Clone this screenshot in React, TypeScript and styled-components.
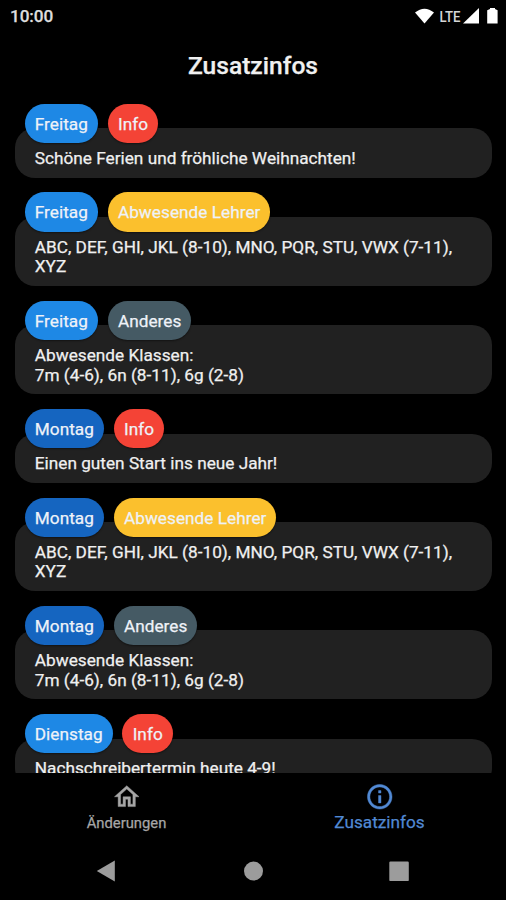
import React from "react";
import styled, { createGlobalStyle } from "styled-components";

const GlobalStyle = createGlobalStyle`
  body { margin: 0; background: #000; }
  * { box-sizing: border-box; }
`;

const Screen = styled.main`
  width: 506px;
  height: 900px;
  display: flex;
  flex-direction: column;
  overflow: hidden;
  background: #000;
  color: #f0f0f0;
  font-family: Roboto, sans-serif;
  -webkit-text-stroke: 0.25px currentColor;
`;

const StatusBar = styled.header`
  flex: none;
  height: 30px;
  padding: 2px 8px 0 10px;
  display: flex;
  align-items: center;
  justify-content: space-between;
`;

const Clock = styled.span`
  font-size: 17.2px;
  font-weight: 500;
  line-height: 20px;
  letter-spacing: -0.1px;
  color: #dedede;
`;

const StatusIcons = styled.svg`
  width: 86px;
  height: 20px;
  display: block;
`;

const Title = styled.h1`
  flex: none;
  margin: 0;
  height: 73.5px;
  line-height: 71px;
  text-align: center;
  font-size: 24.6px;
  font-weight: 500;
`;

const Feed = styled.section`
  flex: none;
  height: 669px;
  overflow: hidden;
  padding: 0.3px 14px 0 14.8px;
`;

const Entry = styled.article`
  margin-bottom: 14.8px;
`;

const Chips = styled.div`
  position: relative;
  z-index: 1;
  display: flex;
  gap: 9.8px;
  padding-left: 9.8px;
  margin-bottom: -14.8px;
`;

const Chip = styled.span<{ $color: string }>`
  height: 39.4px;
  padding: 0 10px 0 10.2px;
  border-radius: 19.7px;
  background: ${(p) => p.$color};
  box-shadow: 0 1px 2px rgba(0, 0, 0, 0.45);
  color: #eef2f8;
  font-size: 17.2px;
  line-height: 41px;
  letter-spacing: 0.04px;
  white-space: nowrap;
`;

const Card = styled.p`
  margin: 0;
  padding: 20.6px 9.8px 8.9px 20px;
  border-radius: 20px;
  background: #212121;
  font-size: 17.23px;
  line-height: 19.7px;
  white-space: pre-line;
`;

const Tabs = styled.nav`
  flex: none;
  height: 70px;
  display: grid;
  grid-template-columns: 1fr 1fr;
`;

const Tab = styled.div<{ $active?: boolean }>`
  display: flex;
  flex-direction: column;
  align-items: center;
  padding-top: 9.5px;
  color: ${(p) => (p.$active ? "#5189d4" : "#a6a6a6")};
  font-size: ${(p) => (p.$active ? "17.2px" : "14.8px")};
  line-height: ${(p) => (p.$active ? "20px" : "22px")};
  svg {
    width: 29.5px;
    height: 29.5px;
    fill: currentColor;
    stroke: currentColor;
    stroke-width: 0.35px;
    display: block;
  }
`;

const SystemBar = styled.footer`
  flex: 1;
  display: flex;
  justify-content: center;
  svg { width: 320px; height: 58px; display: block; }
`;

const BLUE = "#1e88e5";
const DEEP_BLUE = "#1565c0";
const INFO = { label: "Info", color: "#f44336" };
const TEACHERS = { label: "Abwesende Lehrer", color: "#fbc02d" };
const OTHER = { label: "Anderes", color: "#455a64" };

const absentTeachers = "ABC, DEF, GHI, JKL (8-10), MNO, PQR, STU, VWX (7-11), XYZ";
const absentClasses = "Abwesende Klassen:\n7m (4-6), 6n (8-11), 6g (2-8)";

const entries = [
  { day: "Freitag", dayColor: BLUE, kind: INFO, text: "Schöne Ferien und fröhliche Weihnachten!" },
  { day: "Freitag", dayColor: BLUE, kind: TEACHERS, text: absentTeachers },
  { day: "Freitag", dayColor: BLUE, kind: OTHER, text: absentClasses },
  { day: "Montag", dayColor: DEEP_BLUE, kind: INFO, text: "Einen guten Start ins neue Jahr!" },
  { day: "Montag", dayColor: DEEP_BLUE, kind: TEACHERS, text: absentTeachers },
  { day: "Montag", dayColor: DEEP_BLUE, kind: OTHER, text: absentClasses },
  { day: "Dienstag", dayColor: BLUE, kind: INFO, text: "Nachschreibertermin heute 4-9!" },
];

export default function App() {
  return (
    <Screen>
      <GlobalStyle />
      <StatusBar>
        <Clock>10:00</Clock>
        <StatusIcons viewBox="0 0 86 20" fill="#fff">
          <path d="M3 6.5Q12.5-1.2 22 6.5L12.5 17.5Z" />
          <text x="27.5" y="15.5" fontSize="15" fontWeight="500" fill="#d6d6d6" textLength="21" lengthAdjust="spacingAndGlyphs">LTE</text>
          <path d="M51 17.500L67 2V17.500Z" />
          <path d="M75.2 4.2L78 3V2h5v1l2.600 1.200V17.500H75.2Z" />
        </StatusIcons>
      </StatusBar>
      <Title>Zusatzinfos</Title>
      <Feed>
        {entries.map((e, i) => (
          <Entry key={i}>
            <Chips>
              <Chip $color={e.dayColor}>{e.day}</Chip>
              <Chip $color={e.kind.color}>{e.kind.label}</Chip>
            </Chips>
            <Card>{e.text}</Card>
          </Entry>
        ))}
      </Feed>
      <Tabs>
        <Tab>
          <svg viewBox="0 0 24 24">
            <path d="M12 5.69l5 4.5V18h-2v-6H9v6H7v-7.81l5-4.5M12 3L2 12h3v8h6v-6h2v6h6v-8h3L12 3z" />
          </svg>
          Änderungen
        </Tab>
        <Tab $active>
          <svg viewBox="0 0 24 24">
            <path d="M11 7h2v2h-2zm0 4h2v6h-2zm1-9C6.48 2 2 6.48 2 12s4.480 10 10 10 10-4.480 10-10S17.520 2 12 2zm0 18c-4.410 0-8-3.590-8-8s3.590-8 8-8 8 3.590 8 8-3.590 8-8 8z" />
          </svg>
          Zusatzinfos
        </Tab>
      </Tabs>
      <SystemBar>
        <svg viewBox="0 0 320 58" fill="#9c9c9c">
          <path d="M3.800 28L21.800 17.600V38.600Z" />
          <circle cx="160.500" cy="28.100" r="9.500" />
          <rect x="296.300" y="18.600" width="19.500" height="19.500" rx="1.200" />
        </svg>
      </SystemBar>
    </Screen>
  );
}
